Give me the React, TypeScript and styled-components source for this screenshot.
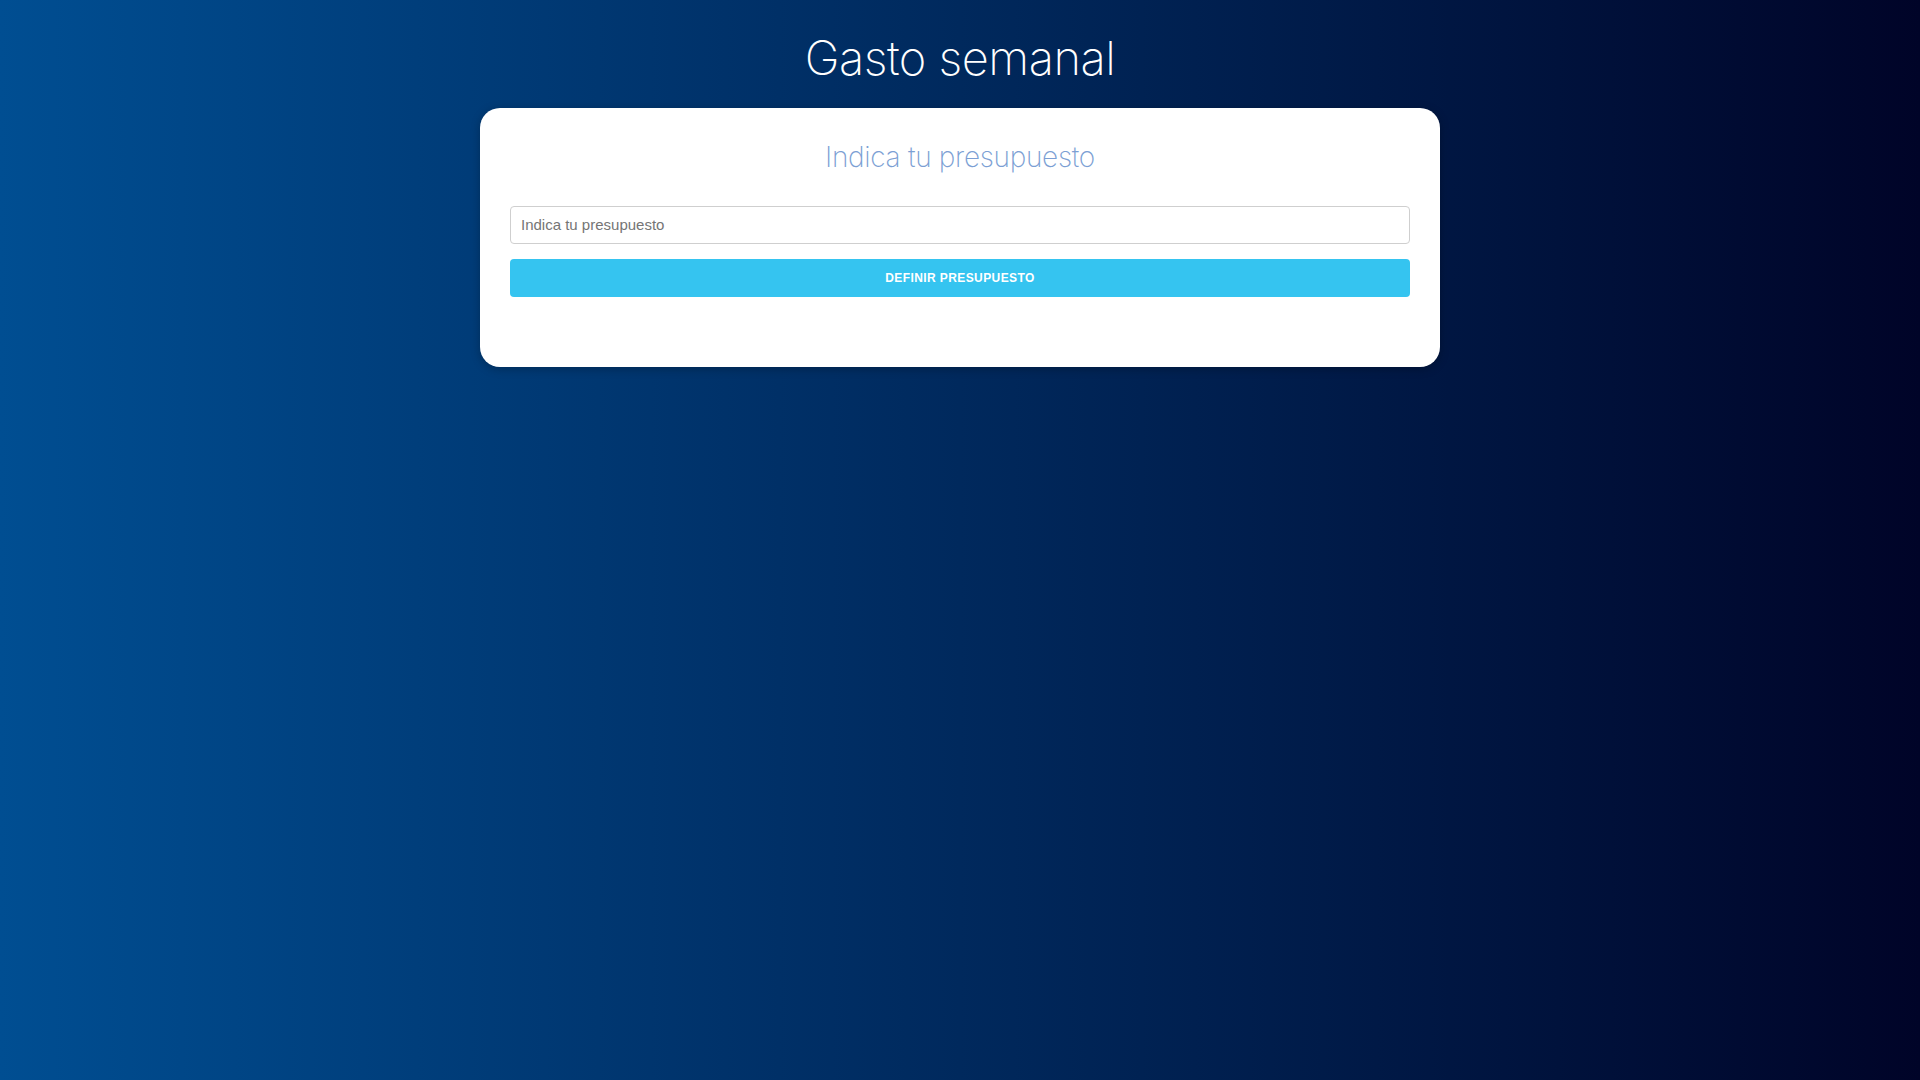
import styled, { createGlobalStyle } from "styled-components";

const GlobalStyle = createGlobalStyle`
  * {
    box-sizing: border-box;
  }
  html, body {
    margin: 0;
    min-height: 100%;
  }
  body {
    min-height: 100vh;
    background: linear-gradient(to right, #004e92, #000428);
    font-family: "Liberation Sans", Arial, sans-serif;
  }
`;

const Page = styled.div`
  display: flex;
  flex-direction: column;
  align-items: center;
  padding: 29px 16px;
`;

const Title = styled.h1`
  margin: 0 0 20px;
  color: #ffffff;
  font-family: Inter, "Open Sans", sans-serif;
  font-weight: 200;
  font-size: 47px;
  line-height: 1.25;
  letter-spacing: -0.5px;
  text-align: center;
`;

const Card = styled.main`
  width: 100%;
  max-width: 960px;
  padding: 32px 30px 70px;
  background: #ffffff;
  border-radius: 20px;
  box-shadow: 0 2px 10px rgba(0, 0, 0, 0.25);
`;

const CardHeading = styled.h2`
  margin: 0 0 31px;
  color: #7c9fd4;
  font-family: Inter, "Open Sans", sans-serif;
  font-weight: 200;
  font-size: 28px;
  line-height: 1.25;
  letter-spacing: -0.3px;
  text-align: center;
`;

const Form = styled.form`
  display: flex;
  flex-direction: column;
  gap: 15px;
`;

const BudgetInput = styled.input`
  height: 38px;
  padding: 6px 10px;
  border: 1px solid #cfcfcf;
  border-radius: 4px;
  font-family: "Liberation Sans", Arial, sans-serif;
  font-size: 15px;
  color: #333;
  outline: none;

  &::placeholder {
    color: #757575;
  }
`;

const SubmitButton = styled.button`
  height: 38px;
  border: none;
  border-radius: 4px;
  background: #35c4f0;
  color: #ffffff;
  font-family: "Liberation Sans", Arial, sans-serif;
  font-weight: 700;
  font-size: 12px;
  letter-spacing: 0.4px;
  text-transform: uppercase;
  cursor: pointer;
`;

export default function App() {
  return (
    <>
      <GlobalStyle />
      <Page>
        <Title>Gasto semanal</Title>
        <Card>
          <CardHeading>Indica tu presupuesto</CardHeading>
          <Form onSubmit={(e) => e.preventDefault()}>
            <BudgetInput type="number" placeholder="Indica tu presupuesto" />
            <SubmitButton type="submit">Definir presupuesto</SubmitButton>
          </Form>
        </Card>
      </Page>
    </>
  );
}
